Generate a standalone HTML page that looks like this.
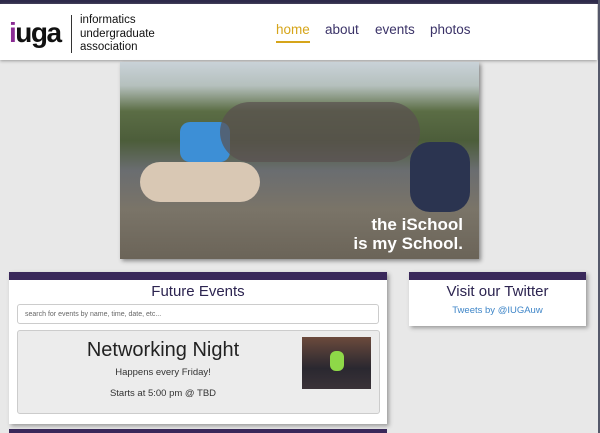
<!DOCTYPE html>
<html><head><style>
body{margin:0;width:600px;height:433px;background:#e8e8e8;font-family:"Liberation Sans",sans-serif;position:relative;overflow:hidden}
.topbar{position:absolute;left:0;top:0;width:600px;height:4px;background:#2e2a4a}
.hdr{position:absolute;left:0;top:4px;width:597px;height:56px;background:#fff;box-shadow:0 1px 3px #999}
.rline{position:absolute;right:0;top:0;width:2px;height:433px;background:#55586a}
.logo{position:absolute;left:9px;top:13px;font-size:28px;font-weight:bold;color:#111;letter-spacing:-1.5px}
.logo b{color:#8a2b93}
.sep{position:absolute;left:71px;top:11px;width:1px;height:38px;background:#333}
.lt{position:absolute;left:80px;top:10px;font-size:11.5px;line-height:13.5px;color:#111}
.nav{position:absolute;top:18px;font-size:13.5px;color:#3b3368}
.photo{position:absolute;left:120px;top:62px;width:359px;height:197px;box-shadow:2px 2px 4px #888;overflow:hidden;
background:linear-gradient(180deg,#c9d2d8 0,#b5c0bd 12%,#5b6d45 25%,#4c5d3a 40%,#6a6d70 55%,#7a7468 75%,#6b6458 100%)}
.box{position:absolute;background:#fff;box-shadow:2px 2px 4px #999;border-top:8px solid #39285a}
h2{margin:0;font-weight:normal;text-align:center;color:#2c2450;font-size:15px}
</style></head><body>
<div class="topbar"></div>
<div class="hdr">
<div class="logo"><b>i</b>uga</div>
<div class="sep"></div>
<div class="lt">informatics<br>undergraduate<br>association</div>
<div class="nav" style="left:276px;color:#d6a51a">home<div style="height:2px;background:#d6a51a;margin-top:4px"></div></div>
<div class="nav" style="left:325px">about</div>
<div class="nav" style="left:375px">events</div>
<div class="nav" style="left:430px">photos</div>
</div>
<div class="photo">
<div style="position:absolute;left:60px;top:60px;width:50px;height:40px;background:#3d8fd6;border-radius:10px"></div>
<div style="position:absolute;left:20px;top:100px;width:120px;height:40px;background:#d9c8b4;border-radius:20px"></div>
<div style="position:absolute;left:100px;top:40px;width:200px;height:60px;background:#5a5050;border-radius:30px;opacity:.7"></div>
<div style="position:absolute;left:290px;top:80px;width:60px;height:70px;background:#2b3450;border-radius:20px"></div>
<div style="position:absolute;left:220px;top:153px;color:#fff;font-weight:bold;font-size:17px;line-height:19px;text-align:right;width:123px">the iSchool<br>is my School.</div>
</div>
<div class="box" style="left:9px;top:272px;width:378px;height:144px">
<h2 style="margin-top:3px">Future Events</h2>
<div style="position:absolute;left:8px;top:24px;width:362px;height:20px;border:1px solid #ccc;border-radius:3px;font-size:7px;color:#666;line-height:19px;padding-left:7px;box-sizing:border-box">search for events by name, time, date, etc...</div>
<div style="position:absolute;left:8px;top:50px;width:361px;height:82px;background:#ececec;border:1px solid #ccc;border-radius:3px">
<div style="position:absolute;left:0;width:290px;text-align:center;top:8px;font-size:20px;color:#222">Networking Night</div>
<div style="position:absolute;left:0;width:290px;text-align:center;top:36px;font-size:9.5px;color:#333">Happens every Friday!</div>
<div style="position:absolute;left:0;width:290px;text-align:center;top:57px;font-size:9.5px;color:#333">Starts at 5:00 pm @ TBD</div>
<div style="position:absolute;left:284px;top:6px;width:69px;height:52px;background:linear-gradient(180deg,#6b4a3c,#2a2830 60%,#3a3238);"><div style="position:absolute;left:28px;top:14px;width:14px;height:20px;background:#8ed848;border-radius:6px"></div></div>
</div>
</div>
<div class="box" style="left:409px;top:272px;width:177px;height:46px">
<h2 style="margin-top:3px">Visit our Twitter</h2>
<div style="text-align:center;font-size:9.5px;color:#3f86c8;margin-top:5px">Tweets by @IUGAuw</div>
</div>
<div style="position:absolute;left:9px;top:429px;width:378px;height:4px;background:#39285a"></div>
<div class="rline"></div>
</body></html>
